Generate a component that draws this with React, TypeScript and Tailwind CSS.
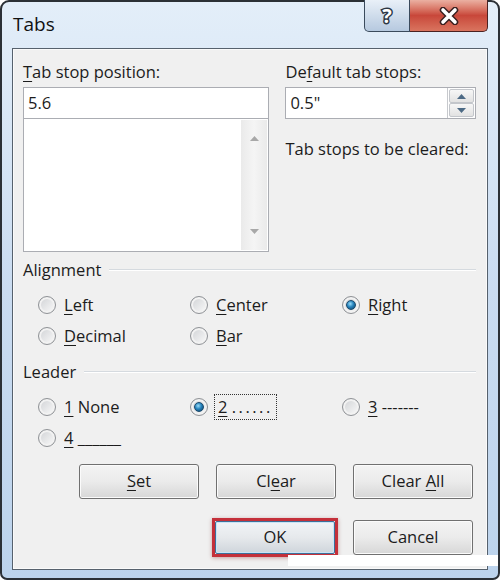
import React from 'react';

const Radio: React.FC<{ checked?: boolean }> = ({ checked }) => (
  <span className="flex h-[18px] w-[18px] shrink-0 items-center justify-center rounded-full border border-[#8f9296] bg-linear-to-br from-[#cfd1d4] to-[#fbfbfb] shadow-[inset_0_0_0_2px_#f2f2f2]">
    {checked && (
      <span className="h-[10px] w-[10px] rounded-full border border-[#1b4a6c] bg-[radial-gradient(circle_at_40%_35%,#9adcf8_0%,#2784bd_45%,#0c3c62_100%)]" />
    )}
  </span>
);

const Option: React.FC<{ checked?: boolean; children: React.ReactNode }> = ({ checked, children }) => (
  <div className="flex h-[31px] items-center gap-[8px]">
    <Radio checked={checked} />
    <span className="leading-[22px]">{children}</span>
  </div>
);

const U: React.FC<{ children: React.ReactNode }> = ({ children }) => (
  <span className="underline decoration-1 underline-offset-[3px]">{children}</span>
);

const GroupLabel: React.FC<{ label: string }> = ({ label }) => (
  <div className="flex h-[22px] items-center">
    <span className="leading-[22px]">{label}</span>
    <div className="ml-[8px] flex-1 border-t border-b border-t-[#d5dadf] border-b-white" />
  </div>
);

const Button: React.FC<{ children: React.ReactNode }> = ({ children }) => (
  <div className="flex h-[35px] w-[120px] items-center justify-center rounded-[3px] border border-[#707070] bg-linear-to-b from-[#f3f3f3] via-[#ebebeb] to-[#d7d7d7] shadow-[inset_0_0_0_1px_#fbfbfb]">
    <span>{children}</span>
  </div>
);

const Arrow: React.FC<{ up?: boolean; color?: string }> = ({ up, color = '#9a9a9a' }) => (
  <svg width="9" height="5" viewBox="0 0 9 5">
    <path d={up ? 'M0 5 L4.5 0 L9 5 Z' : 'M0 0 L4.5 5 L9 0 Z'} fill={color} />
  </svg>
);

const App: React.FC = () => {
  return (
    <div className="h-[580px] w-[500px] bg-white">
      <div className="relative flex h-[580px] w-[500px] flex-col rounded-t-[9px] rounded-b-[7px] border-2 border-[#2b3036] bg-linear-to-b from-[#e3eef9] via-[#cadcf1] to-[#bcd3ec] px-[10px] pb-[8px] font-['Open_Sans','Noto_Sans',sans-serif] text-[16.5px] text-[#1c1c1c]">
        <div className="flex h-[46px] items-center pb-[2px] pl-[1px] text-[19px] text-[#111]">Tabs</div>

        <div className="absolute left-[362px] top-[-2px] flex h-[32px] w-[46px] items-center justify-center rounded-bl-[5px] border border-t-0 border-[#3a4a5c] bg-linear-to-b from-[#e9f0f8] to-[#b6c9df]">
          <span className="text-[20px] font-bold leading-none text-white [-webkit-text-stroke:3px_#2c3644] [paint-order:stroke_fill]">?</span>
        </div>
        <div className="absolute left-[408px] top-[-2px] flex h-[32px] w-[78px] items-center justify-center rounded-br-[5px] border border-t-0 border-l-0 border-[#4a2222] bg-linear-to-b from-[#eab0a2] via-[#c8473a] to-[#d9745f]">
          <svg width="22" height="18" viewBox="0 0 22 18">
            <path d="M5 3 L17 15 M17 3 L5 15" stroke="#3a2020" strokeWidth="6.5" strokeLinecap="round" />
            <path d="M5 3 L17 15 M17 3 L5 15" stroke="#ffffff" strokeWidth="3.6" strokeLinecap="round" />
          </svg>
        </div>

        <div className="flex flex-1 flex-col border border-[#56616d] bg-[#f0f0f0] pl-[10px] pr-[11px] pt-[12px] shadow-[inset_0_0_0_1px_#fafafa]">
          <div className="flex gap-[16px]">
            <div className="w-[247px]">
              <div className="h-[22px] leading-[22px]">
                <U>T</U>ab stop position:
              </div>
              <div className="mt-[4px] flex h-[32px] items-center border border-[#abadb3] bg-white pl-[4px]">5.6</div>
              <div className="-mt-px flex h-[134px] justify-end border border-[#abadb3] bg-white p-px">
                <div className="flex w-[26px] flex-col items-center justify-between bg-linear-to-r from-[#eaeaea] via-[#f5f5f5] to-[#eaeaea] py-[16px]">
                  <Arrow up color="#a8a8a8" />
                  <Arrow color="#a8a8a8" />
                </div>
              </div>
            </div>
            <div className="w-[191px]">
              <div className="h-[22px] leading-[22px]">
                De<U>f</U>ault tab stops:
              </div>
              <div className="mt-[4px] flex h-[32px] items-center justify-between border border-[#abadb3] bg-white pl-[4px]">
                <span>0.5"</span>
                <div className="flex h-full w-[28px] flex-col border-l border-[#c7c9cd] p-px">
                  <div className="flex flex-1 items-center justify-center rounded-[2px] border border-[#c3c6cb] bg-linear-to-b from-[#f7f7f7] to-[#e2e2e2]">
                    <Arrow up color="#4d6a85" />
                  </div>
                  <div className="flex flex-1 items-center justify-center rounded-[2px] border border-[#c3c6cb] bg-linear-to-b from-[#f7f7f7] to-[#e2e2e2]">
                    <Arrow color="#4d6a85" />
                  </div>
                </div>
              </div>
              <div className="mt-[19px] h-[22px] whitespace-nowrap leading-[22px]">Tab stops to be cleared:</div>
            </div>
          </div>

          <div className="mt-[7px]">
            <GroupLabel label="Alignment" />
          </div>
          <div className="mt-[8px] grid grid-cols-[152px_152px_1fr] pl-[15px]">
            <Option>
              <U>L</U>eft
            </Option>
            <Option>
              <U>C</U>enter
            </Option>
            <Option checked>
              <U>R</U>ight
            </Option>
            <Option>
              <U>D</U>ecimal
            </Option>
            <Option>
              <U>B</U>ar
            </Option>
          </div>

          <div className="mt-[10px]">
            <GroupLabel label="Leader" />
          </div>
          <div className="mt-[8px] grid grid-cols-[152px_152px_1fr] pl-[15px]">
            <Option>
              <U>1</U> None
            </Option>
            <div className="flex h-[31px] items-center gap-[6px]">
              <Radio checked />
              <span className="border border-dotted border-[#333] px-[3px] leading-[24px]">
                <U>2</U> <span className="tracking-[2.5px]">......</span>
              </span>
            </div>
            <Option>
              <U>3</U> -------
            </Option>
            <Option>
              <U>4</U> ______
            </Option>
          </div>

          <div className="mt-[11px] flex justify-end gap-[17px] pr-[3px]">
            <Button>
              <U>S</U>et
            </Button>
            <Button>
              Cl<U>e</U>ar
            </Button>
            <Button>
              Clear <U>A</U>ll
            </Button>
          </div>

          <div className="mt-[19px] flex items-center justify-end gap-[15px] pr-[3px]">
            <div className="h-[39px] w-[126px] border-[3px] border-[#c4303a] shadow-[0_1px_4px_rgba(120,0,0,0.35)]">
              <div className="flex h-full w-full items-center justify-center rounded-[2px] border border-[#3d6f99] bg-linear-to-b from-[#f1f4f7] via-[#e6e9ec] to-[#cfd5db] shadow-[inset_0_0_0_1px_#c9e4f6]">
                OK
              </div>
            </div>
            <Button>Cancel</Button>
          </div>
        </div>

        <div className="absolute left-[286px] top-[553px] h-[11px] w-[210px] bg-white" />
      </div>
    </div>
  );
};

export default App;
